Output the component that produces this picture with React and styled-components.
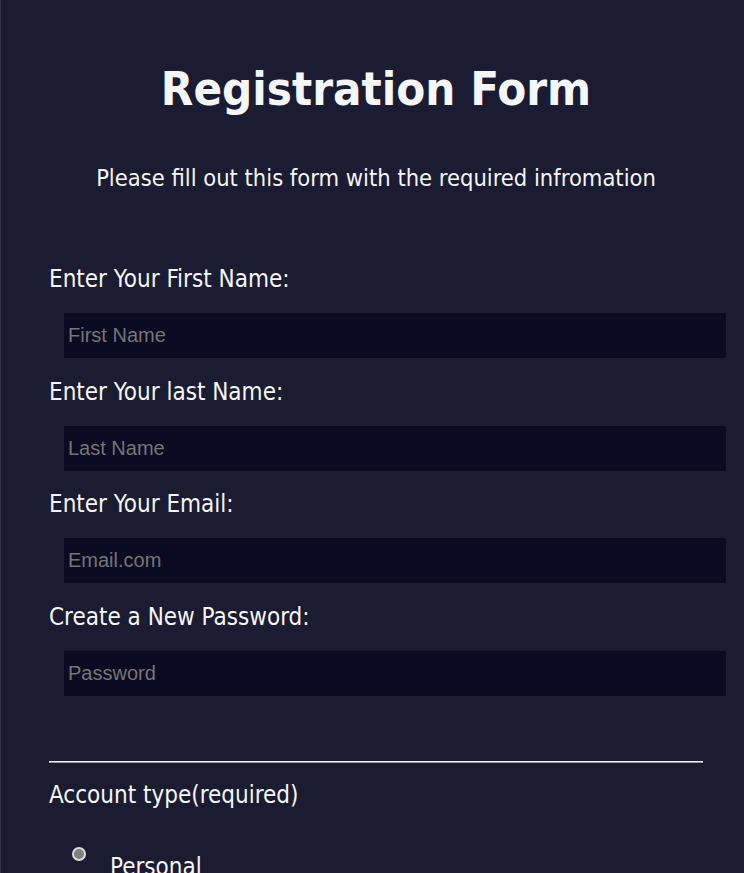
import React from 'react';
import styled, { createGlobalStyle } from 'styled-components';

const GlobalStyle = createGlobalStyle`
  html, body {
    margin: 0;
    padding: 0;
    background: #1b1b32;
  }
  body {
    font-family: "DejaVu Sans Condensed", "DejaVu Sans", sans-serif;
    color: #f5f6f7;
  }
  * {
    box-sizing: border-box;
  }
`;

const Page = styled.div`
  min-height: 873px;
  background: #1b1b32;
  border-left: 1px solid #33334a;
  padding: 61px 0 0 48px;
`;

const Title = styled.h1`
  margin: 0;
  width: 654px;
  text-align: center;
  font-size: 47px;
  line-height: 56px;
  font-weight: bold;
`;

const Subtitle = styled.p`
  margin: 47px 0 0;
  width: 654px;
  text-align: center;
  font-size: 23.5px;
  line-height: 28px;
`;

const Form = styled.form`
  width: 654px;
  margin-top: 73px;
`;

const Fieldset = styled.fieldset`
  border: none;
  margin: 0;
  padding: 0;
  display: flex;
  flex-direction: column;
  gap: 19.5px;
`;

const Field = styled.label`
  display: flex;
  flex-direction: column;
  gap: 20px;
  font-size: 24px;
  line-height: 28px;
`;

const Input = styled.input`
  display: block;
  margin-left: 15px;
  width: 662px;
  height: 45px;
  padding: 0 4px;
  border: none;
  outline: none;
  background: #0a0a23;
  color: #f5f6f7;
  font-family: "Liberation Sans", Arial, sans-serif;
  font-size: 20px;

  &::placeholder {
    color: #757575;
  }
`;

const Divider = styled.hr`
  margin: 65px 0 0;
  height: 2px;
  border: none;
  border-top: 1px solid #f0f0f0;
  border-bottom: 1px solid #9a9aa6;
`;

const Legend = styled.p`
  margin: 18px 0 0;
  font-size: 24px;
  line-height: 28px;
`;

const RadioRow = styled.label`
  display: flex;
  align-items: flex-start;
  gap: 24px;
  margin: 38px 0 0 23px;
  font-size: 24px;
  line-height: 28px;
`;

const Radio = styled.input`
  appearance: none;
  margin: 0;
  width: 14px;
  height: 14px;
  border-radius: 50%;
  border: 2px solid #dcdcdc;
  background: #808080;
  flex-shrink: 0;
`;

const RadioText = styled.span`
  margin-top: 6px;
`;

const fields = [
  { label: 'Enter Your First Name:', placeholder: 'First Name', type: 'text' },
  { label: 'Enter Your last Name:', placeholder: 'Last Name', type: 'text' },
  { label: 'Enter Your Email:', placeholder: 'Email.com', type: 'email' },
  { label: 'Create a New Password:', placeholder: 'Password', type: 'password' },
];

export default function App() {
  return (
    <>
      <GlobalStyle />
      <Page>
        <Title>Registration Form</Title>
        <Subtitle>Please fill out this form with the required infromation</Subtitle>
        <Form>
          <Fieldset>
            {fields.map((f) => (
              <Field key={f.label}>
                {f.label}
                <Input type={f.type} placeholder={f.placeholder} />
              </Field>
            ))}
          </Fieldset>
          <Divider />
          <Legend>Account type(required)</Legend>
          <RadioRow>
            <Radio type="radio" name="account" />
            <RadioText>Personal</RadioText>
          </RadioRow>
        </Form>
      </Page>
    </>
  );
}
